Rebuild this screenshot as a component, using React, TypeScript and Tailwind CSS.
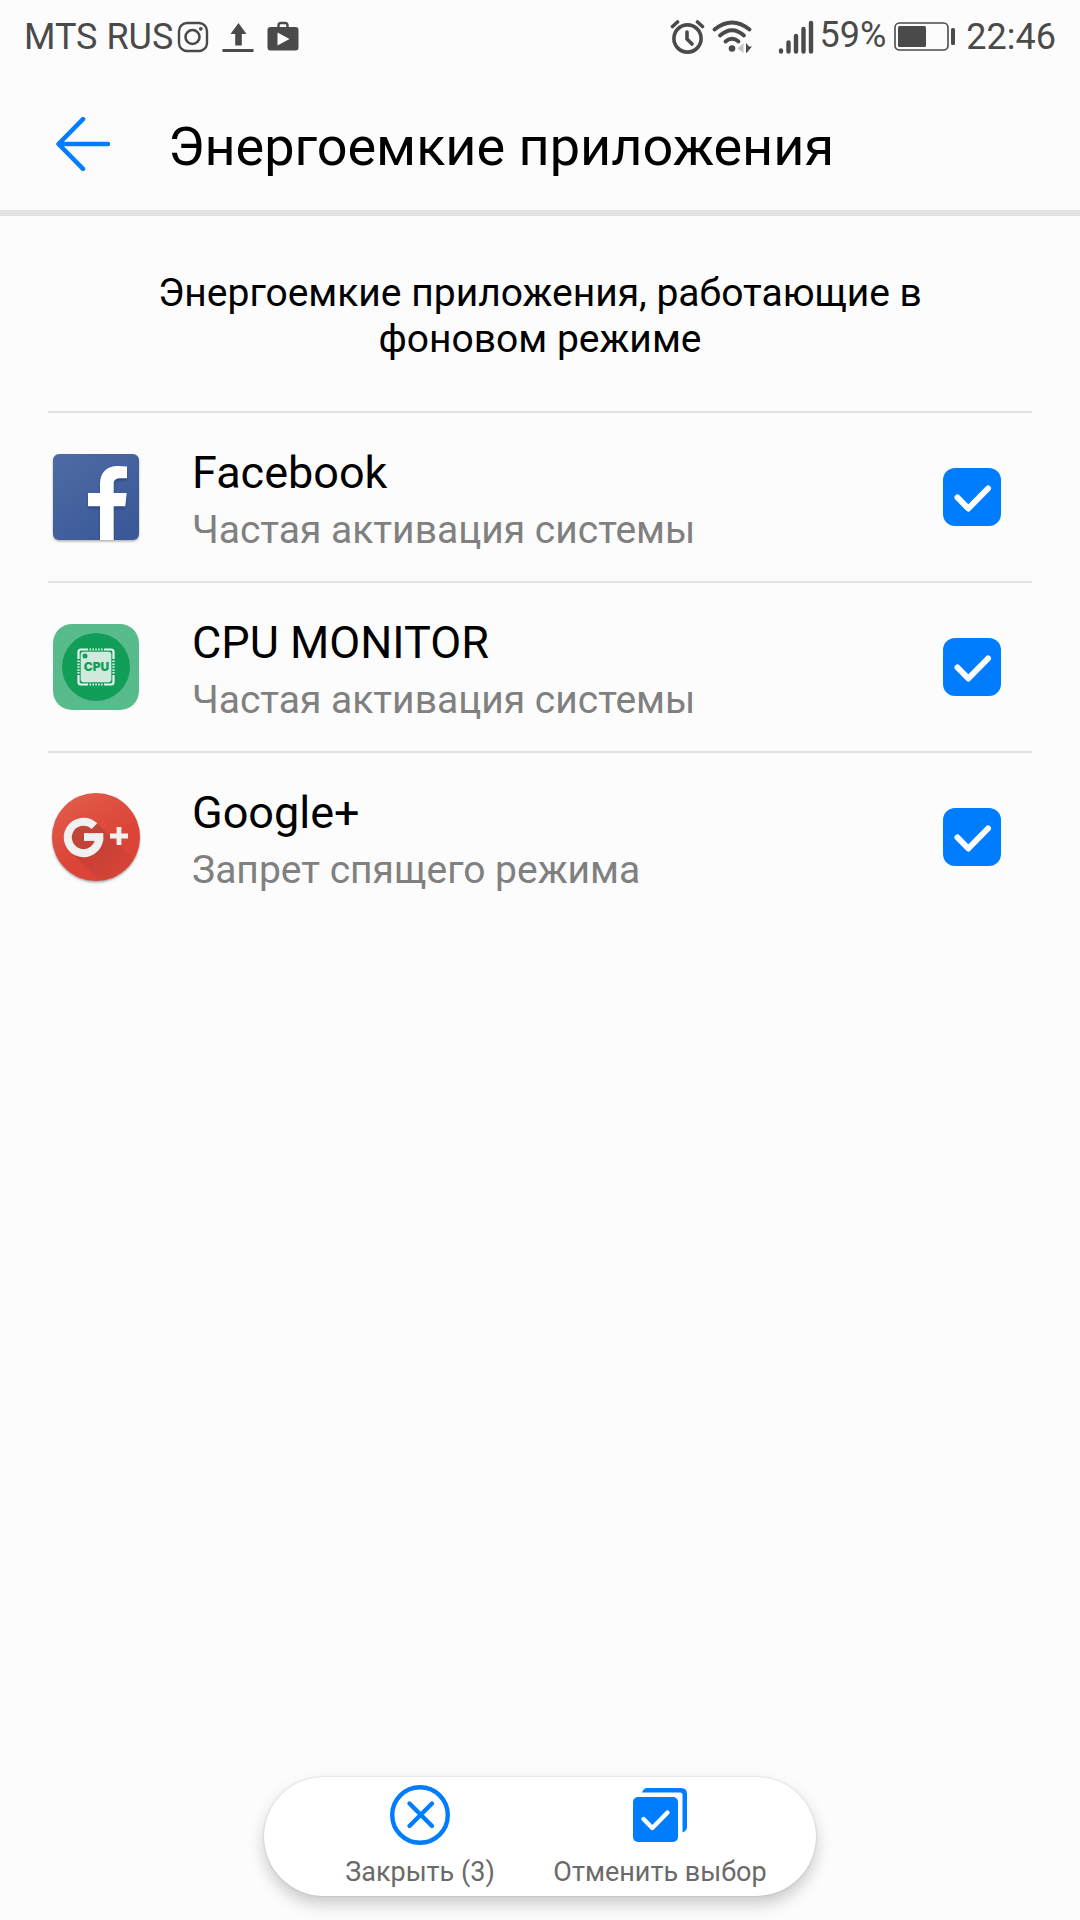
import { useState } from "react";
import type { ReactNode } from "react";

function InstagramIcon() {
  return (
    <svg className="h-8 w-8" viewBox="0 0 32 32" fill="none" stroke="currentColor">
      <rect x="2" y="2" width="28" height="28" rx="8" strokeWidth="2.4" />
      <circle cx="15.5" cy="16" r="7" strokeWidth="2.6" />
      <circle cx="23.8" cy="7.8" r="1.9" fill="currentColor" stroke="none" />
    </svg>
  );
}

function UploadIcon() {
  return (
    <svg className="h-8 w-8" viewBox="0 0 32 32" fill="currentColor">
      <path d="M16.5 2 24.5 13H19.8V24.5H13.2V13H8.5Z" />
      <path d="M.5 28h31v3H.5z" />
    </svg>
  );
}

function StoreIcon() {
  return (
    <svg className="h-8 w-8" viewBox="0 0 32 32" fill="currentColor">
      <path
        fillRule="evenodd"
        d="M3.5 6h25a3 3 0 0 1 3 3v17.5a3 3 0 0 1-3 3h-25a3 3 0 0 1-3-3V9a3 3 0 0 1 3-3ZM10.5 11.5v13L22.5 18Z"
      />
      <path d="M11.5 7V4.500Q11.5 2 14 2h4q2.5 0 2.5 2.5V7" fill="none" stroke="currentColor" strokeWidth="2.4" />
    </svg>
  );
}

function AlarmIcon() {
  return (
    <svg className="h-9 w-9" viewBox="0 0 36 36" fill="none" stroke="currentColor" strokeLinecap="round">
      <circle cx="17.5" cy="19.5" r="13.6" strokeWidth="3.6" />
      <path d="M17 13v7l5 5" strokeWidth="3.6" strokeLinejoin="round" />
      <path d="M2.5 7.5 7.5 3M32.5 7.500 27.5 3" strokeWidth="3.6" />
    </svg>
  );
}

function WifiIcon() {
  return (
    <svg className="h-9 w-10" viewBox="0 0 40 36" fill="none" stroke="currentColor" strokeLinecap="round">
      <path d="M2.5 10.5Q20 -3.5 37.5 10.5" strokeWidth="3.8" />
      <path d="M8 16.500Q20 6 32 16.5" strokeWidth="3.8" />
      <path d="M13.5 22.500Q20 17 26.5 22.5" strokeWidth="3.8" />
      <circle cx="20" cy="29.5" r="3.3" fill="currentColor" stroke="none" />
      <path d="M31.5 24v10l-6-4.5Z" fill="#c4c4c4" stroke="none" />
      <path d="M34 24v10l1-.5 5-6h-3Z" fill="currentColor" stroke="none" />
    </svg>
  );
}

function SignalIcon() {
  return (
    <svg className="h-9 w-9" viewBox="0 0 36 36" stroke="currentColor" strokeWidth="4.4" strokeLinecap="round">
      <path d="M3 31.5v1M10.5 23.5V32.5M18 17V32.5M25.5 10V32.5M33 4V32.5" />
    </svg>
  );
}

function BatteryIcon() {
  return (
    <svg className="h-8 w-[62px]" viewBox="0 0 62 32" fill="currentColor">
      <rect x="1" y="2" width="53" height="27" rx="4.5" fill="none" stroke="currentColor" strokeWidth="1.6" />
      <rect x="4" y="5" width="28" height="21" rx="1.5" />
      <rect x="57" y="7" width="4" height="17" rx="1.5" />
    </svg>
  );
}

function BackIcon() {
  return (
    <svg
      className="h-[54px] w-[54px]"
      viewBox="0 0 54 54"
      fill="none"
      stroke="currentColor"
      strokeWidth="4.5"
      strokeLinecap="round"
      strokeLinejoin="round"
    >
      <path d="M27 2.2 2.5 27 27 51.8M3 27H52" />
    </svg>
  );
}

function FacebookLogo() {
  return (
    <svg className="size-24 shrink-0" viewBox="0 0 96 96">
      <defs>
        <linearGradient id="fb-bg" x1="0" y1="0" x2="0.7" y2="1">
          <stop offset="0" stopColor="#4f6ba6" />
          <stop offset="1" stopColor="#3b5998" />
        </linearGradient>
        <filter id="fb-soft" x="-20%" y="-20%" width="140%" height="140%">
          <feGaussianBlur stdDeviation="1.2" />
        </filter>
        <clipPath id="fb-clip">
          <rect x="5" y="5" width="86" height="86" rx="6" />
        </clipPath>
      </defs>
      <rect x="5" y="6.5" width="86" height="86" rx="6" fill="#000" opacity="0.3" filter="url(#fb-soft)" />
      <rect x="5" y="5" width="86" height="86" rx="6" fill="url(#fb-bg)" />
      <g clipPath="url(#fb-clip)">
        <path
          d="M52 93V59.5H40V46H52V37C52 26 58 19 70 19Q75 19 79 19.5V31.5H73C68 31.5 65.7 33 65.7 37V46H78.7L77.3 59.5H65.7V93Z"
          fill="#1d356b"
          opacity="0.5"
          filter="url(#fb-soft)"
        />
        <path
          d="M52 91V57.3H40V44H52V35C52 24 58 17 70 17Q75 17 79 17.5V29.3H73C68 29.3 65.7 31 65.7 35V44H78.7L77.3 57.3H65.7V91Z"
          fill="#fff"
        />
      </g>
    </svg>
  );
}

function CpuLogo() {
  return (
    <svg className="size-24 shrink-0" viewBox="0 0 96 96">
      <rect x="5" y="5" width="86" height="86" rx="19" fill="#58bb8b" />
      <circle cx="48" cy="48" r="34" fill="#129e59" />
      {/* chip frame corners, then the pins between them */}
      <path
        d="M40 30.5H33Q30.5 30.5 30.5 33V40M56 30.5H63Q65.5 30.5 65.5 33V40M40 65.5H33Q30.5 65.5 30.5 63V56M56 65.5H63Q65.5 65.5 65.5 63V56"
        fill="none"
        stroke="#eaf6f0"
        strokeWidth="2.2"
      />
      <path
        d="M41.5 30.5H55M41.5 65.5H55M30.5 41.5V55M65.5 41.5V55"
        stroke="#eaf6f0"
        strokeWidth="2.2"
        strokeDasharray="1.5 1.4"
      />
      <rect x="32.7" y="32.7" width="30.6" height="30.6" rx="3" fill="#d0ebde" />
      <circle cx="37" cy="37" r="2.5" fill="#129e59" />
      <text
        x="48.5"
        y="52"
        textAnchor="middle"
        fontFamily="Inter, sans-serif"
        fontWeight="900"
        fontSize="12"
        fill="#129e59"
      >
        CPU
      </text>
    </svg>
  );
}

function GooglePlusLogo() {
  return (
    <svg className="size-24 shrink-0" viewBox="0 0 96 96">
      <defs>
        <linearGradient id="gp-bg" x1="0" y1="0" x2="0.6" y2="1">
          <stop offset="0" stopColor="#e2604f" />
          <stop offset="0.7" stopColor="#db4437" />
        </linearGradient>
        <linearGradient id="gp-shade" x1="0.1" y1="0.1" x2="0.8" y2="0.8">
          <stop offset="0" stopColor="#3e2723" stopOpacity="0.2" />
          <stop offset="1" stopColor="#3e2723" stopOpacity="0.02" />
        </linearGradient>
        <filter id="gp-soft" x="-20%" y="-20%" width="140%" height="140%">
          <feGaussianBlur stdDeviation="1.2" />
        </filter>
        <clipPath id="gp-clip">
          <circle cx="48" cy="48" r="44" />
        </clipPath>
      </defs>
      <circle cx="48" cy="49.5" r="44" fill="#000" opacity="0.35" filter="url(#gp-soft)" />
      <circle cx="48" cy="48" r="44" fill="url(#gp-bg)" />
      <path d="M49 34 96 81V96H56L21.5 61.5 22 40Z" fill="url(#gp-shade)" clipPath="url(#gp-clip)" />
      <g fill="none" stroke="#f1f1f1">
        <path d="M46.5 37.2A15.7 15.7 0 1 0 51.2 48" strokeWidth="8" />
        <path d="M36 48H55.3" strokeWidth="7.8" />
        <path d="M62 47H80M71 38V56" strokeWidth="4.8" />
      </g>
    </svg>
  );
}

function CloseIcon() {
  return (
    <svg className="h-[60px] w-[60px]" viewBox="0 0 60 60" fill="none" stroke="currentColor" strokeWidth="4.4">
      <circle cx="30" cy="30" r="27.8" />
      <path d="M19.5 18.5 42 41M42 18.5 19.5 41" strokeLinecap="round" />
    </svg>
  );
}

function DeselectIcon() {
  return (
    <svg className="h-[60px] w-[60px]" viewBox="0 0 60 60">
      <path
        d="M12 7.5Q13.5 3 17 3H51Q57 3 57 9V42Q57 45.5 52.5 47.5V10Q52.5 7.5 50 7.5Z"
        fill="currentColor"
      />
      <rect x="3" y="12" width="45" height="45" rx="5" fill="currentColor" />
      <path
        d="M13.5 34 22.3 43 37.5 27.5"
        fill="none"
        stroke="#fff"
        strokeWidth="4.4"
        strokeLinecap="round"
        strokeLinejoin="round"
      />
    </svg>
  );
}

type AppItem = {
  id: string;
  name: string;
  reason: string;
  icon: ReactNode;
};

const apps: AppItem[] = [
  { id: "facebook", name: "Facebook", reason: "Частая активация системы", icon: <FacebookLogo /> },
  { id: "cpu", name: "CPU MONITOR", reason: "Частая активация системы", icon: <CpuLogo /> },
  { id: "gplus", name: "Google+", reason: "Запрет спящего режима", icon: <GooglePlusLogo /> },
];

function StatusBar() {
  return (
    <div className="flex h-[74px] items-center justify-between px-6 text-4xl text-[#4a4a4a]">
      <div className="flex items-center">
        <span>MTS RUS</span>
        <div className="ml-1 flex items-center gap-[13px]">
          <InstagramIcon />
          <UploadIcon />
          <StoreIcon />
        </div>
      </div>
      <div className="flex items-center">
        <AlarmIcon />
        <div className="ml-1.5">
          <WifiIcon />
        </div>
        <div className="ml-[26px]">
          <SignalIcon />
        </div>
        <span className="ml-1.5 pb-1">59%</span>
        <div className="ml-2">
          <BatteryIcon />
        </div>
        <span className="ml-2.5">22:46</span>
      </div>
    </div>
  );
}

function AppRow({ app, checked, onToggle }: { app: AppItem; checked: boolean; onToggle: () => void }) {
  return (
    <li className="border-t-2 border-[#e2e2e2]">
      <label htmlFor={app.id} className="flex h-[168px] items-center gap-12 pr-[31px]">
        {app.icon}
        <span className="flex min-w-0 flex-1 flex-col">
          <span className="text-[45px] leading-[66px] text-black">{app.name}</span>
          <span className="text-[39px] leading-[48px] text-[#808080]">{app.reason}</span>
        </span>
        <span className="grid">
          <input
            id={app.id}
            type="checkbox"
            checked={checked}
            onChange={onToggle}
            className="col-start-1 row-start-1 size-[58px] appearance-none rounded-xl border-4 border-[#b0b0b0] checked:border-0 checked:bg-[#007dff]"
          />
          {checked && (
            <svg
              className="pointer-events-none col-start-1 row-start-1 size-[58px]"
              viewBox="0 0 58 58"
              fill="none"
              stroke="#fff"
              strokeWidth="6"
              strokeLinecap="round"
              strokeLinejoin="round"
            >
              <path d="M14.5 29.5 25.3 40.5 45 20.5" />
            </svg>
          )}
        </span>
      </label>
    </li>
  );
}

export default function App() {
  const [selected, setSelected] = useState<string[]>(apps.map((a) => a.id));

  const toggle = (id: string) =>
    setSelected((prev) => (prev.includes(id) ? prev.filter((x) => x !== id) : [...prev, id]));

  return (
    <div className="flex min-h-screen flex-col bg-[#fcfcfc] font-['Roboto',sans-serif]">
      <StatusBar />

      <header className="flex h-[142px] items-center border-b-6 border-[#e2e2e2] pt-1 pr-12 pl-14">
        <button type="button" aria-label="Назад" className="text-[#007dff]">
          <BackIcon />
        </button>
        <h1 className="pt-1.5 pl-[58px] text-[54px] leading-[64px] text-black">Энергоемкие приложения</h1>
      </header>

      <main className="px-12">
        <p className="mx-auto max-w-[800px] pt-[54px] pb-[49px] text-center text-[39px] leading-[46px] text-black">
          Энергоемкие приложения, работающие в фоновом режиме
        </p>
        <ul>
          {apps.map((app) => (
            <AppRow key={app.id} app={app} checked={selected.includes(app.id)} onToggle={() => toggle(app.id)} />
          ))}
        </ul>
      </main>

      {/* Floating action bar */}
      <footer className="mx-auto mt-auto mb-6 flex rounded-full bg-white px-9 shadow-[0_0_2px_rgba(0,0,0,0.2),0_8px_16px_rgba(0,0,0,0.2)]">
        <button type="button" className="flex w-[240px] flex-col items-center pt-2 pb-1.5 text-[#007dff]">
          <CloseIcon />
          <span className="pt-2.5 text-[27px] leading-[35px] text-[#6a6a6a]">Закрыть ({selected.length})</span>
        </button>
        <button
          type="button"
          onClick={() => setSelected([])}
          className="flex w-[240px] flex-col items-center pt-2 pb-1.5 text-[#007dff]"
        >
          <DeselectIcon />
          <span className="pt-2.5 text-[27px] leading-[35px] text-[#6a6a6a]">Отменить выбор</span>
        </button>
      </footer>
    </div>
  );
}
